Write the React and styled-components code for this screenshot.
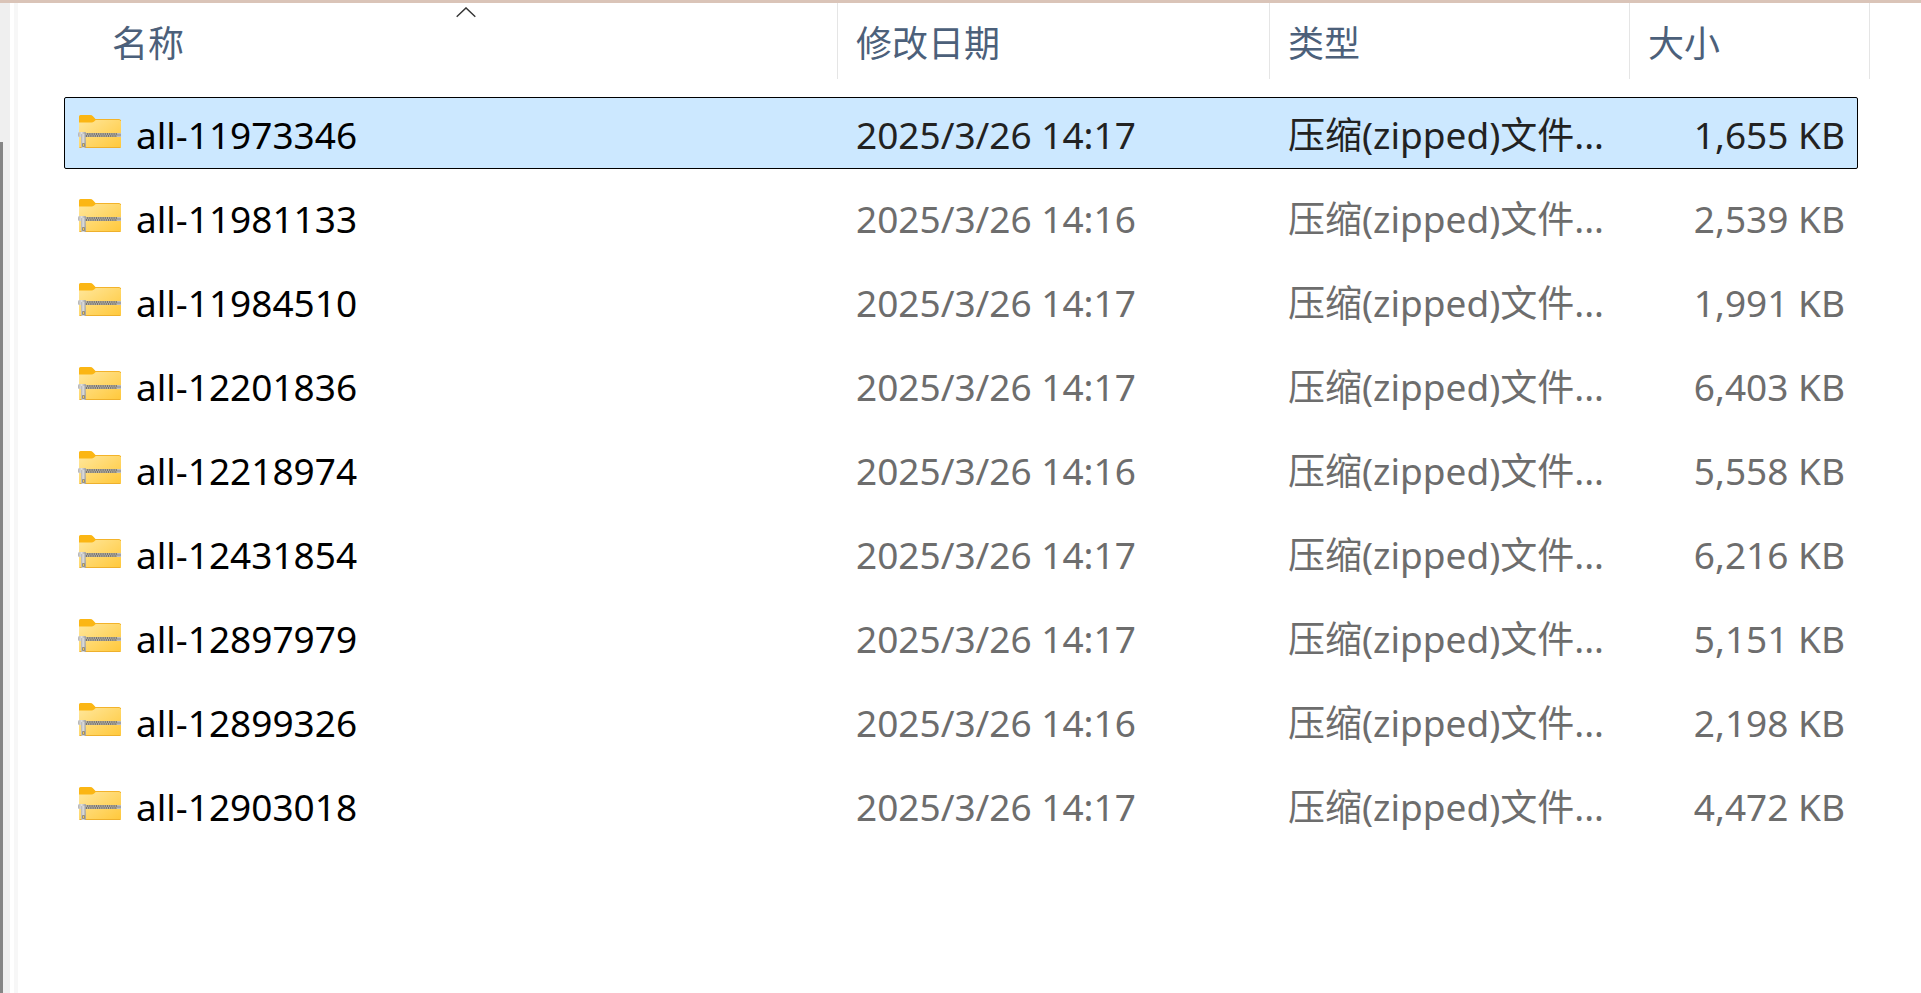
import React from "react";
import styled, { createGlobalStyle } from "styled-components";

const GlobalStyle = createGlobalStyle`
  * { box-sizing: border-box; }
  body {
    margin: 0;
    background: #fff;
    color: #000;
    font-family: "Noto Sans", "Noto Sans CJK SC", sans-serif;
    font-size: 37px;
    line-height: 50px;
  }
`;

const Window = styled.div`
  display: flex;
  min-height: 100vh;
  border-top: 3px solid #dac4b8;
`;

const ScrollTrack = styled.div`
  flex: none;
  display: flex;
  width: 10px;
  padding-top: 139px;
  background: #efefef;
`;

const ScrollThumb = styled.div`
  width: 3px;
  background: #858585;
`;

const Splitter = styled.div`
  flex: none;
  width: 4px;
  margin-left: 4px;
  background: #f7f7f7;
`;

const Pane = styled.main`
  flex: 1;
  min-width: 0;
  padding: 0 51px 0 46px;
`;

const Table = styled.table`
  display: block;
`;

const HeadGroup = styled.thead`
  display: block;
  margin-bottom: 18px;
`;

const HeadRow = styled.tr`
  display: grid;
  grid-template-columns: minmax(300px, 1fr) 432px 360px 240px;
  padding-left: 30px;
`;

const HeadCell = styled.th`
  display: flex;
  position: relative;
  height: 76px;
  padding: 0;
  border-right: 1px solid #e5e5e5;
  font-weight: normal;
`;

const SortButton = styled.button`
  flex: 1;
  padding: 6px 18px 0;
  border: 0;
  background: none;
  color: #4c607a;
  font: inherit;
  font-size: 36px;
  text-align: left;
`;

const SortMark = styled.svg`
  position: absolute;
  top: 4px;
  left: 50%;
  margin-left: -10px;
`;

const Body = styled.tbody`
  display: flex;
  flex-direction: column;
  gap: 12px;
  margin-right: 12px;
`;

const FileRow = styled.tr`
  display: grid;
  grid-template-columns: minmax(330px, 1fr) 432px 360px 228px;
  align-items: center;
  height: 72px;
  border: 1px solid ${(p) => (p.$selected ? "#000" : "transparent")};
  border-radius: 2px;
  background: ${(p) => (p.$selected ? "#cce8ff" : "transparent")};
  color: ${(p) => (p.$selected ? "#222" : "#6d6d6d")};
`;

const Cell = styled.td`
  padding: 4px 12px 0 19px;
  text-align: ${(p) => (p.$right ? "right" : "left")};
  white-space: nowrap;
`;

const NameCell = styled(Cell)`
  display: flex;
  align-items: center;
  gap: 14px;
  padding-left: 13px;
  color: #000;
`;

const Icon = styled.svg`
  flex: none;
  margin-bottom: 6px;
`;

const Defs = styled.svg`
  display: block;
`;

function ZipDefs() {
  return (
    <Defs width="0" height="0" aria-hidden="true">
      <defs>
        <linearGradient id="folder" x1="0" y1="0" x2="1" y2="1">
          <stop offset="0" stopColor="#ffe79c" />
          <stop offset="1" stopColor="#ffc83a" />
        </linearGradient>
        <linearGradient id="metal" x1="0" y1="0" x2="1" y2="0">
          <stop offset="0" stopColor="#b4b4b4" />
          <stop offset="0.45" stopColor="#dedede" />
          <stop offset="1" stopColor="#989898" />
        </linearGradient>
      </defs>
    </Defs>
  );
}

function ZipIcon() {
  return (
    <Icon width="44" height="34" viewBox="0 0 44 34" aria-hidden="true">
      <path d="M1 1.5Q1 0 2.5 0H12q2 0 3.2 1.4L17.5 4H41v6H1z" fill="#fbb614" />
      <path d="M1 7.5h12.5q1.5 0 2.6-1l1-1q1-1 2.4-1H41.5Q43 4.5 43 6v25.5Q43 33 41.5 33h-39Q1 33 1 31.5z" fill="url(#folder)" />
      <path d="M17.5 4.5H41.5Q42.5 4.500 42.500 6" fill="none" stroke="#f3b32a" />
      <path d="M1.5 32.500h41" stroke="#eeb02c" />
      <path d="M8 18h31v4H8z" fill="#77736a" />
      <path d="M8 19h31M9 21h30" stroke="#e9e6dc" strokeWidth="1.200" strokeDasharray="1.200 1" />
      <path d="M39 18h4v4h-4z" fill="#bdbdbd" />
      <path d="M39 20h4" stroke="#8b8b8b" />
      <path d="M0 18.500Q0 17 1.500 17H7q1 0 1 1v4H1.500Q0 22 0 20.500z" fill="url(#metal)" />
      <path d="M3 19h4.500l.500 13q0 1-1 1H4q-1 0-1-1z" fill="url(#metal)" />
      <path d="M4.500 28.500h2v3h-2z" fill="#f6c94d" stroke="#858077" strokeWidth=".8" />
    </Icon>
  );
}

const columns = ["名称", "修改日期", "类型", "大小"];

const files = [
  ["all-11973346", "2025/3/26 14:17", "1,655 KB"],
  ["all-11981133", "2025/3/26 14:16", "2,539 KB"],
  ["all-11984510", "2025/3/26 14:17", "1,991 KB"],
  ["all-12201836", "2025/3/26 14:17", "6,403 KB"],
  ["all-12218974", "2025/3/26 14:16", "5,558 KB"],
  ["all-12431854", "2025/3/26 14:17", "6,216 KB"],
  ["all-12897979", "2025/3/26 14:17", "5,151 KB"],
  ["all-12899326", "2025/3/26 14:16", "2,198 KB"],
  ["all-12903018", "2025/3/26 14:17", "4,472 KB"],
];

export default function App() {
  return (
    <>
      <GlobalStyle />
      <ZipDefs />
      <Window lang="zh-CN">
        <ScrollTrack>
          <ScrollThumb />
        </ScrollTrack>
        <Splitter />
        <Pane>
          <Table>
            <HeadGroup>
              <HeadRow>
                {columns.map((label, i) => (
                  <HeadCell key={label} scope="col" aria-sort={i === 0 ? "ascending" : undefined}>
                    <SortButton type="button">{label}</SortButton>
                    {i === 0 && (
                      <SortMark width="20" height="11" viewBox="0 0 20 11" aria-hidden="true">
                        <path d="M.7 9.700L10 .9l9.300 8.800" fill="none" stroke="#333" strokeWidth="1.400" />
                      </SortMark>
                    )}
                  </HeadCell>
                ))}
              </HeadRow>
            </HeadGroup>
            <Body>
              {files.map(([name, date, size], i) => (
                <FileRow key={name} $selected={i === 0} aria-selected={i === 0}>
                  <NameCell>
                    <ZipIcon />
                    {name}
                  </NameCell>
                  <Cell>{date}</Cell>
                  <Cell>压缩(zipped)文件...</Cell>
                  <Cell $right>{size}</Cell>
                </FileRow>
              ))}
            </Body>
          </Table>
        </Pane>
      </Window>
    </>
  );
}
